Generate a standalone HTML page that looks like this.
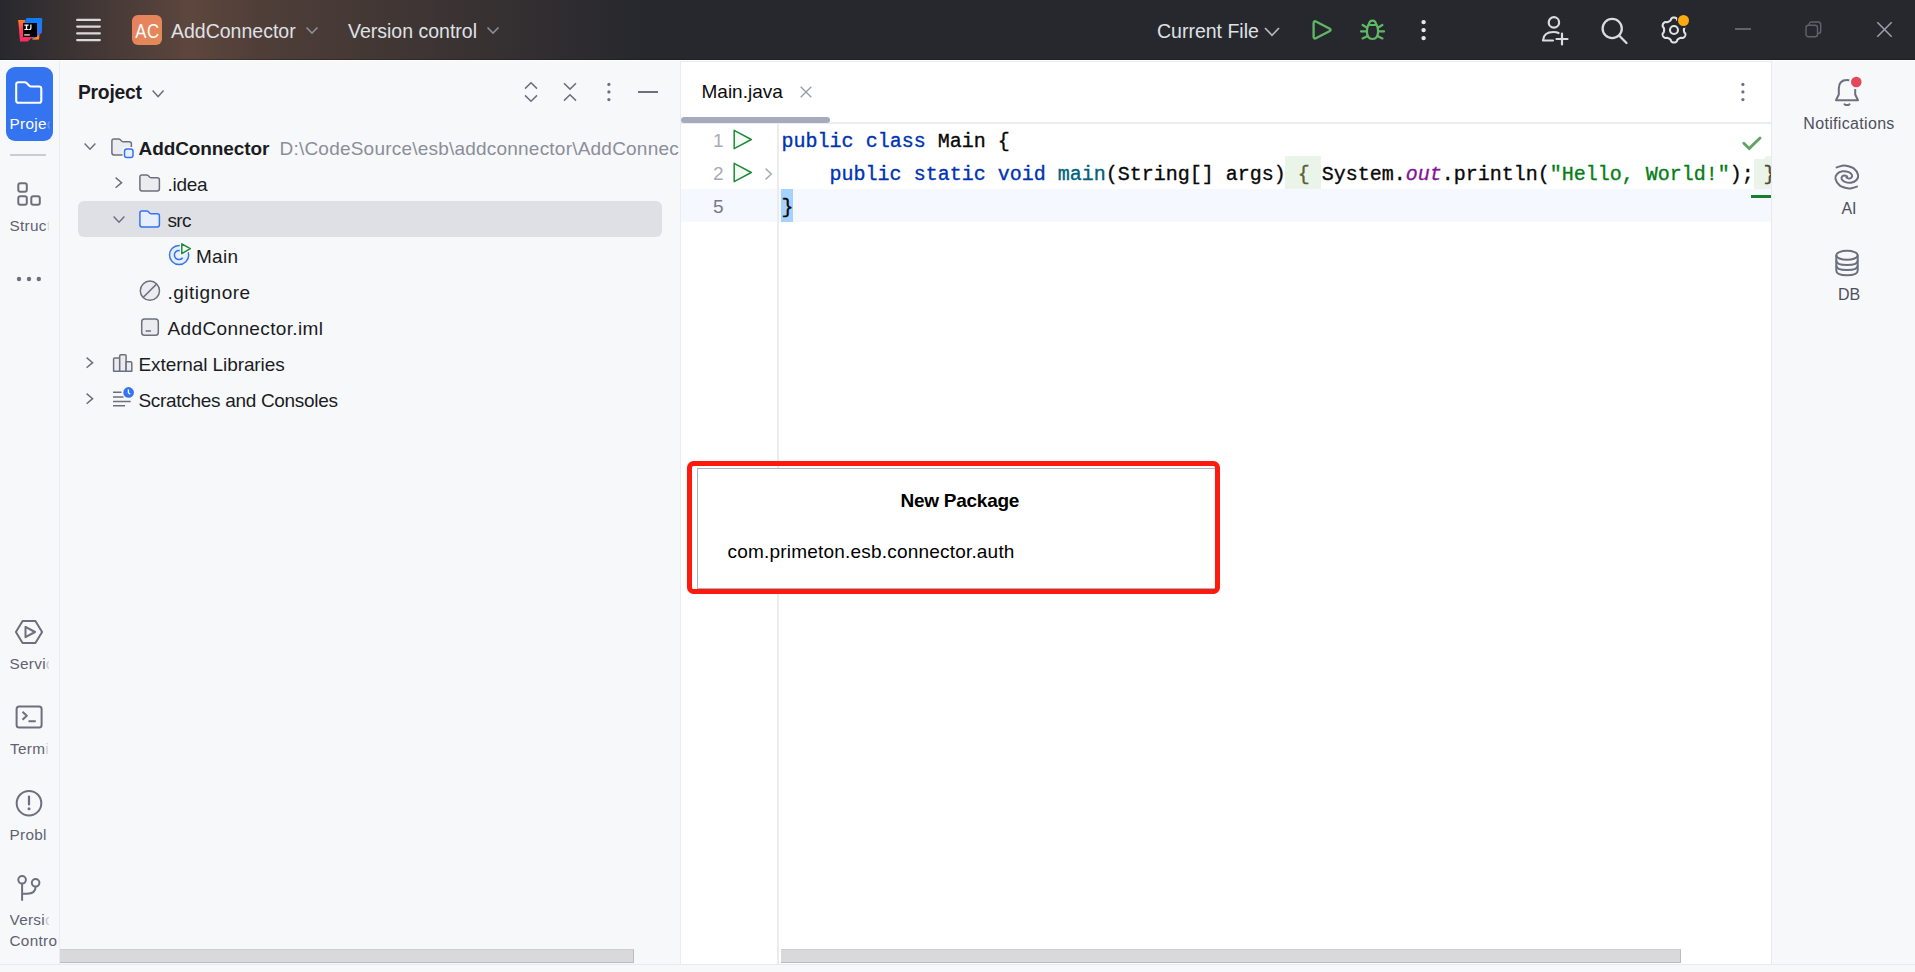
<!DOCTYPE html>
<html>
<head>
<meta charset="utf-8">
<title>AddConnector - Main.java</title>
<style>
*{box-sizing:border-box;margin:0;padding:0}
html,body{width:1915px;height:972px;overflow:hidden;background:#f7f8fa;font-family:"Liberation Sans",sans-serif;color:#1b1c1f}
.abs{position:absolute}
#titlebar{position:absolute;left:0;top:0;width:1915px;height:60px;background:#27282e;overflow:hidden}
#titlebar .glow{position:absolute;left:0;top:0;width:700px;height:60px;background:linear-gradient(90deg,rgba(39,40,46,0) 0px,rgba(96,72,62,.95) 190px,rgba(86,66,58,.85) 260px,rgba(39,40,46,0) 640px)}
.tt{position:absolute;color:#dfe1e5;font-size:19.5px;line-height:24px;margin-top:1px;white-space:nowrap}
#leftstripe{position:absolute;left:0;top:60px;width:60px;height:905px;background:#f7f8fa;border-right:1px solid #ebecf0;overflow:hidden}
.sl{position:absolute;left:0;width:58px;margin-top:2px;font-size:15.300px;letter-spacing:0.300px;color:#5f6270;white-space:nowrap;overflow:hidden}
#project{position:absolute;left:60px;top:60px;width:621px;height:905px;background:#f7f8fa;border-right:1px solid #ebecf0;overflow:hidden}
.row{position:absolute;left:0;margin-top:1px;height:36px;font-size:19.5px;line-height:36px;white-space:nowrap;color:#1b1c1f}
#editor{position:absolute;left:681px;top:60px;width:1091px;height:905px;background:#fff;overflow:hidden}
#rightstripe{position:absolute;left:1771px;top:60px;width:144px;height:905px;background:#f7f8fa;border-left:1.800px solid #e8e9ee}
.rl{position:absolute;left:0;width:152px;text-align:center;font-size:16px;color:#4d505c;white-space:nowrap}
#status{position:absolute;left:0;top:964px;width:1915px;height:8px;background:#f7f8fa;border-top:1.800px solid #e9eaee;z-index:5}
.code{position:absolute;font-family:"Liberation Mono",monospace;font-size:20px;line-height:33px;margin-top:2px;white-space:pre;color:#080808;-webkit-text-stroke:0.35px currentColor}
.kw{color:#0033b3}.fn{color:#00627a}.st{color:#067d17}.fl{color:#871094;font-style:italic}
.ln{position:absolute;font-size:19px;color:#a8abb5;text-align:right;width:40px;line-height:33px}
svg{position:absolute;overflow:visible}
</style>
</head>
<body>
<div id="titlebar">
  <div class="glow"></div>
  <!-- IntelliJ logo -->
  <svg style="left:17px;top:17px" width="26" height="26" viewBox="0 0 26 26">
    <defs>
      <linearGradient id="lg1" x1="0" y1="0" x2="0.4" y2="1"><stop offset="0" stop-color="#ff8a1a"/><stop offset="0.45" stop-color="#ff3d5a"/><stop offset="1" stop-color="#ff2a5f"/></linearGradient>
      <linearGradient id="lg2" x1="0" y1="0" x2="0.3" y2="1"><stop offset="0" stop-color="#087cfa"/><stop offset="0.7" stop-color="#1f7cf5"/><stop offset="1" stop-color="#6b57d9"/></linearGradient>
    </defs>
    <path d="M16 20 L22.5 17 L22 22.5 L15.5 22.8 Z" fill="#ff8a0d"/>
    <path d="M1.2 3 L8 3 L16 20 L10.5 24.5 L3 24.5 Z" fill="url(#lg1)"/>
    <path d="M9.5 1 L24 1 Q25.2 1 25.2 2.2 L24.8 16 L15.5 22.5 L7.5 5 Z" fill="url(#lg2)"/>
    <rect x="6" y="6" width="14" height="14" fill="#000"/>
    <rect x="7.2" y="17.2" width="5.6" height="1.4" fill="#d8d8d8"/>
    <path d="M7.4 7.6h4.2v1.1h-1.4v3.3h1.4v1.1H7.4v-1.1h1.4V8.700H7.4z M13.300 7.600h1.2v3.600q0 1.900 -1.900 1.900h-0.700v-1.100h0.500q0.900 0 0.900 -0.900z" fill="#fff"/>
  </svg>
  <!-- hamburger -->
  <svg style="left:75px;top:15px" width="28" height="30" viewBox="0 0 28 30"><path d="M2.200 4.900 H24.800 M2.200 11.600 H24.800 M2.200 18.400 H24.800 M2.200 25.100 H24.800" stroke="#d7d9de" stroke-width="2.300" stroke-linecap="round" fill="none"/></svg>
  <!-- AC badge -->
  <div class="abs" style="left:132px;top:15px;width:30px;height:30px;border-radius:6px;background:linear-gradient(135deg,#e9805f,#e28a58);color:#fff;font-size:20px;line-height:33px;text-align:center;letter-spacing:0.500px"><span style="display:inline-block;transform:scaleX(.84)">AC</span></div>
  <div class="tt" id="t_ac" style="left:171px;top:18px">AddConnector</div>
  <svg style="left:305px;top:25.500px" width="14" height="9" viewBox="0 0 14 9"><path d="M1.5 1.5 L7 7 L12.5 1.5" fill="none" stroke="#8b8e97" stroke-width="1.6"/></svg>
  <div class="tt" id="t_vc" style="left:348px;top:18px">Version control</div>
  <svg style="left:486px;top:26px" width="14" height="9" viewBox="0 0 14 9"><path d="M1.500 1.500 L7 7 L12.500 1.500" fill="none" stroke="#8b8e97" stroke-width="1.6"/></svg>
  <div class="tt" id="t_cf" style="left:1157px;top:18px">Current File</div>
  <svg style="left:1264px;top:27px" width="16" height="10" viewBox="0 0 16 10"><path d="M1 1 L8 8.3 L15 1" fill="none" stroke="#b4b7bf" stroke-width="1.7"/></svg>
  <!-- run -->
  <svg style="left:1311px;top:19px" width="22" height="22" viewBox="0 0 22 22"><path d="M2.600 4.400 Q2.600 1.300 5.300 2.700 L18.400 9.600 Q20.800 10.900 18.400 12.200 L5.300 19.100 Q2.600 20.500 2.600 17.400 Z" fill="none" stroke="#5fb865" stroke-width="2.300" stroke-linejoin="round"/></svg>
  <!-- debug -->
  <svg style="left:1359px;top:18px" width="27" height="24" viewBox="0 0 27 24">
    <g fill="none" stroke="#5fb865" stroke-width="2.200" stroke-linecap="round">
      <path d="M9.700 6.800 A3.900 5.500 0 0 1 17.300 6.800"/>
      <path d="M9.300 7 H17.700 Q19.100 9.500 19.100 13.500 Q19.100 21 13.500 21 Q7.900 21 7.900 13.500 Q7.900 9.500 9.300 7 Z" stroke-linejoin="round"/>
      <path d="M8.200 9.800 L3.600 7 M18.800 9.800 L23.400 7 M7.800 13.400 H2 M19.200 13.400 H25 M8.600 18 L3.600 20.400 M18.400 18 L23.400 20.400"/>
    </g>
  </svg>
  <!-- vertical dots -->
  <svg style="left:1420px;top:18px" width="8" height="24" viewBox="0 0 8 24"><g fill="#e4e6ea"><circle cx="3.600" cy="4.100" r="2.200"/><circle cx="3.600" cy="12.100" r="2.200"/><circle cx="3.600" cy="20.100" r="2.200"/></g></svg>
  <!-- add user -->
  <svg style="left:1541px;top:15px" width="30" height="32" viewBox="0 0 30 32">
    <g fill="none" stroke="#d9dbdf" stroke-width="2.200" stroke-linecap="round">
      <circle cx="12.900" cy="7.400" r="5.200"/>
      <path d="M2 25.500 Q2.500 17 12.500 17 Q15.500 17 17.500 18 M2 25.500 H12"/>
      <path d="M21 18.500 V29.500 M15.500 24 H26.500"/>
    </g>
  </svg>
  <!-- search -->
  <svg style="left:1600.300px;top:16px" width="30" height="30" viewBox="0 0 30 30"><g fill="none" stroke="#d9dbdf" stroke-width="2.300" stroke-linecap="round"><circle cx="12.200" cy="12.500" r="9.600"/><path d="M19.300 19.800 L26.500 27"/></g></svg>
  <!-- gear -->
  <svg style="left:1660px;top:16px" width="28" height="28" viewBox="-14 -14 28 28">
    <path id="gear" fill="none" stroke="#dfe1e5" stroke-width="2.100" stroke-linejoin="round" d="M9.90 0.00 L9.91 0.26 L9.92 0.52 L9.95 0.78 L9.99 1.05 L10.04 1.32 L10.10 1.60 L10.18 1.89 L10.29 2.19 L10.43 2.51 L10.82 2.90 L11.19 3.31 L11.30 3.67 L11.35 4.02 L11.36 4.36 L11.34 4.70 L11.29 5.03 L11.21 5.35 L11.11 5.66 L10.98 5.96 L10.83 6.25 L10.65 6.53 L10.45 6.79 L10.24 7.03 L10.00 7.26 L9.74 7.47 L9.46 7.66 L9.16 7.82 L8.83 7.95 L8.46 8.03 L7.92 7.92 L7.39 7.78 L7.04 7.82 L6.73 7.88 L6.44 7.95 L6.16 8.03 L5.90 8.12 L5.65 8.22 L5.41 8.33 L5.18 8.45 L4.95 8.57 L4.73 8.71 L4.51 8.85 L4.30 9.01 L4.08 9.17 L3.87 9.35 L3.67 9.55 L3.46 9.76 L3.25 10.00 L3.05 10.29 L2.90 10.82 L2.72 11.35 L2.47 11.62 L2.19 11.84 L1.90 12.02 L1.60 12.17 L1.29 12.29 L0.97 12.38 L0.65 12.45 L0.33 12.49 L0.00 12.50 L-0.33 12.49 L-0.65 12.45 L-0.97 12.38 L-1.29 12.29 L-1.60 12.17 L-1.90 12.02 L-2.19 11.84 L-2.47 11.62 L-2.72 11.35 L-2.90 10.82 L-3.05 10.29 L-3.25 10.00 L-3.46 9.76 L-3.67 9.55 L-3.87 9.35 L-4.08 9.17 L-4.30 9.01 L-4.51 8.85 L-4.73 8.71 L-4.95 8.57 L-5.18 8.45 L-5.41 8.33 L-5.65 8.22 L-5.90 8.12 L-6.16 8.03 L-6.44 7.95 L-6.73 7.88 L-7.04 7.82 L-7.39 7.78 L-7.92 7.92 L-8.46 8.03 L-8.83 7.95 L-9.16 7.82 L-9.46 7.66 L-9.74 7.47 L-10.00 7.26 L-10.24 7.03 L-10.45 6.79 L-10.65 6.53 L-10.83 6.25 L-10.98 5.96 L-11.11 5.66 L-11.21 5.35 L-11.29 5.03 L-11.34 4.70 L-11.36 4.36 L-11.35 4.02 L-11.30 3.67 L-11.19 3.31 L-10.82 2.90 L-10.43 2.51 L-10.29 2.19 L-10.18 1.89 L-10.10 1.60 L-10.04 1.32 L-9.99 1.05 L-9.95 0.78 L-9.92 0.52 L-9.91 0.26 L-9.90 0.00 L-9.91 -0.26 L-9.92 -0.52 L-9.95 -0.78 L-9.99 -1.05 L-10.04 -1.32 L-10.10 -1.60 L-10.18 -1.89 L-10.29 -2.19 L-10.43 -2.51 L-10.82 -2.90 L-11.19 -3.31 L-11.30 -3.67 L-11.35 -4.02 L-11.36 -4.36 L-11.34 -4.70 L-11.29 -5.03 L-11.21 -5.35 L-11.11 -5.66 L-10.98 -5.96 L-10.83 -6.25 L-10.65 -6.53 L-10.45 -6.79 L-10.24 -7.03 L-10.00 -7.26 L-9.74 -7.47 L-9.46 -7.66 L-9.16 -7.82 L-8.83 -7.95 L-8.46 -8.03 L-7.92 -7.92 L-7.39 -7.78 L-7.04 -7.82 L-6.73 -7.88 L-6.44 -7.95 L-6.16 -8.03 L-5.90 -8.12 L-5.65 -8.22 L-5.41 -8.33 L-5.18 -8.45 L-4.95 -8.57 L-4.73 -8.71 L-4.51 -8.85 L-4.30 -9.01 L-4.08 -9.17 L-3.87 -9.35 L-3.67 -9.55 L-3.46 -9.76 L-3.25 -10.00 L-3.05 -10.29 L-2.90 -10.82 L-2.72 -11.35 L-2.47 -11.62 L-2.19 -11.84 L-1.90 -12.02 L-1.60 -12.17 L-1.29 -12.29 L-0.97 -12.38 L-0.65 -12.45 L-0.33 -12.49 L-0.00 -12.50 L0.33 -12.49 L0.65 -12.45 L0.97 -12.38 L1.29 -12.29 L1.60 -12.17 L1.90 -12.02 L2.19 -11.84 L2.47 -11.62 L2.72 -11.35 L2.90 -10.82 L3.05 -10.29 L3.25 -10.00 L3.46 -9.76 L3.67 -9.55 L3.87 -9.35 L4.08 -9.17 L4.30 -9.01 L4.51 -8.85 L4.73 -8.71 L4.95 -8.57 L5.18 -8.45 L5.41 -8.33 L5.65 -8.22 L5.90 -8.12 L6.16 -8.03 L6.44 -7.95 L6.73 -7.88 L7.04 -7.82 L7.39 -7.78 L7.92 -7.92 L8.46 -8.03 L8.83 -7.95 L9.16 -7.82 L9.46 -7.66 L9.74 -7.47 L10.00 -7.26 L10.24 -7.03 L10.45 -6.79 L10.65 -6.53 L10.83 -6.25 L10.98 -5.96 L11.11 -5.66 L11.21 -5.35 L11.29 -5.03 L11.34 -4.70 L11.36 -4.36 L11.35 -4.02 L11.30 -3.67 L11.19 -3.31 L10.82 -2.90 L10.43 -2.51 L10.29 -2.19 L10.18 -1.89 L10.10 -1.60 L10.04 -1.32 L9.99 -1.05 L9.95 -0.78 L9.92 -0.52 L9.91 -0.26 Z"/>
    <circle cx="0" cy="0" r="4" fill="none" stroke="#dfe1e5" stroke-width="2.100"/>
  </svg>
  <div class="abs" style="left:1676.5px;top:13px;width:14.500px;height:14.500px;border-radius:50%;background:#27282e"></div>
  <div class="abs" style="left:1678.2px;top:14.700px;width:11.200px;height:11.200px;border-radius:50%;background:#fbab10"></div>
  <!-- window controls -->
  <div class="abs" style="left:1735px;top:28px;width:16px;height:1.500px;background:#5f636b"></div>
  <svg style="left:1805px;top:21px" width="17" height="17" viewBox="0 0 17 17"><g fill="none" stroke="#5f636b" stroke-width="1.400"><rect x="1" y="4.200" width="11.500" height="11.500" rx="2.500"/><path d="M4.200 4 V3.500 Q4.200 1 6.700 1 H13 Q15.700 1 15.700 3.700 V10 Q15.700 12.500 13.200 12.500 H12.700"/></g></svg>
  <svg style="left:1876px;top:21px" width="17" height="17" viewBox="0 0 17 17"><path d="M1.300 1.300 L15.700 15.700 M15.700 1.300 L1.300 15.700" fill="none" stroke="#9ea1a9" stroke-width="1.500"/></svg>
</div>
<div id="leftstripe">
  <!-- coords relative to (0,60) -->
  <div class="abs" style="left:6px;top:7px;width:47px;height:74px;border-radius:9px;background:#3574f0"></div>
  <svg style="left:14px;top:20px" width="30" height="26" viewBox="0 0 30 26"><path d="M2.200 4.500 Q2.200 2.200 4.500 2.200 H10.800 Q11.800 2.200 12.600 3 L15.300 5.800 Q16 6.500 17 6.500 H25 Q27.300 6.500 27.300 8.800 V20.500 Q27.300 22.800 25 22.800 H4.500 Q2.200 22.800 2.200 20.500 Z" fill="none" stroke="#fff" stroke-width="2.100" stroke-linejoin="round"/></svg>
  <div class="sl" id="s_proj" style="left:9.500px;top:52px;width:40px;color:#fff;line-height:20px">Proje<span style="opacity:.25">c</span></div>
  <div class="abs" style="left:10px;top:94px;width:36px;height:2px;background:#c9ccd6"></div>
  <!-- structure -->
  <svg style="left:16px;top:121px" width="26" height="26" viewBox="0 0 26 26"><g fill="none" stroke="#6c707e" stroke-width="2"><rect x="2.300" y="2.300" width="8.500" height="8.500" rx="2"/><rect x="2.300" y="15.300" width="8.500" height="8.500" rx="2"/><rect x="15.300" y="15.300" width="8.500" height="8.500" rx="2"/></g></svg>
  <div class="sl" id="s_struc" style="left:9.500px;top:154px;width:39px;line-height:20px">Struc<span style="opacity:.2">t</span></div>
  <!-- more -->
  <svg style="left:15px;top:215px" width="28" height="8" viewBox="0 0 28 8"><g fill="#6c707e"><circle cx="4" cy="4" r="2.200"/><circle cx="14" cy="4" r="2.200"/><circle cx="23.800" cy="4" r="2.200"/></g></svg>
  <!-- services -->
  <svg style="left:14px;top:559px" width="30" height="26" viewBox="0 0 30 26"><g fill="none" stroke="#6c707e" stroke-width="2" stroke-linejoin="round"><path d="M1.900 13 L8.600 1.900 H21.400 L28.100 13 L21.400 24.100 H8.600 Z"/><path d="M11.500 7.800 L21 13 L11.500 18.200 Z"/></g></svg>
  <div class="sl" id="s_serv" style="left:9.500px;top:592px;width:39px;line-height:20px">Servi<span style="opacity:.3">c</span></div>
  <!-- terminal -->
  <svg style="left:15px;top:645px" width="28" height="24" viewBox="0 0 28 24"><g fill="none" stroke="#6c707e" stroke-width="2" stroke-linejoin="round"><rect x="1.600" y="1.500" width="25" height="21" rx="2.500"/><path d="M7.500 6.800 L11.800 10.800 L7.500 14.800 M13.500 16.200 H20.800"/></g></svg>
  <div class="sl" id="s_term" style="left:10px;top:677px;width:38px;line-height:20px">Term<span style="opacity:.25">i</span></div>
  <!-- problems -->
  <svg style="left:15px;top:729px" width="28" height="28" viewBox="0 0 28 28"><circle cx="14" cy="14.200" r="12.300" fill="none" stroke="#6c707e" stroke-width="2"/><path d="M14 7.500 V15.500" stroke="#6c707e" stroke-width="2.200" stroke-linecap="round"/><circle cx="14" cy="19.800" r="1.500" fill="#6c707e"/></svg>
  <div class="sl" id="s_prob" style="left:9.500px;top:763px;width:38px;line-height:20px">Probl</div>
  <!-- vcs -->
  <svg style="left:16px;top:813px" width="26" height="30" viewBox="0 0 26 30"><g fill="none" stroke="#6c707e" stroke-width="2" stroke-linecap="round"><circle cx="6.100" cy="6.800" r="3.800"/><circle cx="19.600" cy="9.800" r="3.800"/><path d="M6.100 10.800 V27 M19.600 13.800 Q19.600 20.700 11 20.700 H6.100"/></g></svg>
  <div class="sl" id="s_vers" style="left:9.500px;top:848px;width:39px;line-height:20px">Versi<span style="opacity:.3">c</span></div>
  <div class="sl" id="s_cont" style="left:9.500px;top:869px;width:49px;line-height:20px">Contro</div>
</div>
<div id="project"></div>
<div id="editor"></div>
<div id="rightstripe"></div>
<div id="status"></div>
<div id="edlayer" class="abs" style="left:681px;top:60px;width:1090px;height:905px;overflow:hidden;background:#fff">
  <!-- coords relative to (681,60) -->
  <div class="abs" style="left:0;top:1px;width:1090px;height:1.200px;background:#ebecf0"></div>
  <div class="abs" id="tabtxt" style="left:20.500px;top:20px;font-size:19px;line-height:24px;color:#0b0c0e;white-space:nowrap">Main.java</div>
  <svg style="left:119.300px;top:25.800px" width="12" height="12" viewBox="0 0 12 12"><path d="M0.700 0.700 L11.300 11.300 M11.300 0.700 L0.700 11.300" stroke="#9699a6" stroke-width="1.300" fill="none"/></svg>
  <svg style="left:1059px;top:21px" width="6" height="22" viewBox="0 0 6 22"><g fill="#6c707e"><circle cx="2.900" cy="3.400" r="1.600"/><circle cx="2.900" cy="10.900" r="1.600"/><circle cx="2.900" cy="18.600" r="1.600"/></g></svg>
  <div class="abs" style="left:0;top:62px;width:1090px;height:1.700px;background:#ebecf0"></div>
  <div class="abs" style="left:0.200px;top:57px;width:148.600px;height:5.800px;border-radius:3px;background:#a6abbb"></div>
  <!-- current line -->
  <div class="abs" style="left:0;top:129px;width:1090px;height:33px;background:#f5f8fe"></div>
  <!-- gutter separator -->
  <div class="abs" style="left:96.200px;top:64px;width:1.800px;height:841px;background:#ebecf0"></div>
  <!-- line numbers -->
  <div class="ln" style="left:2.700px;top:64px">1</div>
  <div class="ln" style="left:2.700px;top:97px">2</div>
  <div class="ln" style="left:2.700px;top:130px;color:#767a8a">5</div>
  <svg style="left:52px;top:69px" width="20" height="21" viewBox="0 0 20 21"><path d="M1.200 1.300 L18.300 10.500 L1.200 19.700 Z" fill="#f2fcf3" stroke="#208a3c" stroke-width="1.500" stroke-linejoin="round"/></svg>
  <svg style="left:52px;top:102px" width="20" height="21" viewBox="0 0 20 21"><path d="M1.200 1.300 L18.300 10.500 L1.200 19.700 Z" fill="#f2fcf3" stroke="#208a3c" stroke-width="1.500" stroke-linejoin="round"/></svg>
  <svg style="left:83.500px;top:108px" width="8" height="12" viewBox="0 0 8 12"><path d="M0.600 0.600 L6.300 6 L0.600 11.400" fill="none" stroke="#a8abb5" stroke-width="1.500"/></svg>
  <!-- fold highlights -->
  <div class="abs" style="left:604.300px;top:96px;width:36px;height:33px;background:#ebf4e8"></div>
  <div class="abs" style="left:1072.500px;top:99px;width:20px;height:30px;background:#ebf4e8"></div>
  <div class="abs" style="left:1083px;top:96px;width:12px;height:8px;border-radius:4px 0 0 0;background:#ebf4e8"></div>
  <!-- selection on closing brace -->
  <div class="abs" style="left:100px;top:129px;width:12px;height:33px;background:#a6d2ff"></div>
  <!-- code -->
  <div class="code" id="c1" style="left:100.600px;top:63px"><span class="kw">public</span> <span class="kw">class</span> Main {</div>
  <div class="code" id="c2" style="left:100.600px;top:96px">    <span class="kw">public</span> <span class="kw">static</span> <span class="kw">void</span> <span class="fn">main</span>(String[] args) <span style="color:#5b5f35">{</span> System.<span class="fl">out</span>.println(<span class="st">"Hello, World!"</span>); <span style="color:#4a4d30;position:relative;left:-2.500px">}</span></div>
  <div class="code" id="c3" style="left:100.600px;top:129px">}</div>
  <!-- inspection check -->
  <svg style="left:1061px;top:76px" width="20" height="15" viewBox="0 0 20 15"><path d="M1.800 7.300 L7.200 12.500 L18 2" fill="none" stroke="#5fa463" stroke-width="2.900" stroke-linecap="round"/></svg>
  <div class="abs" style="left:1070px;top:134.500px;width:20px;height:3.500px;background:#18802a"></div>
  <!-- h scrollbar -->
  <div class="abs" style="left:100px;top:889px;width:900px;height:14px;background:#d9d9db;border-top:1px solid #cfcfd2;border-right:1.500px solid #bcbcc0;border-bottom:1.500px solid #bcbcc0"></div>
</div>
<div id="rslayer" class="abs" style="left:1773px;top:60px;width:142px;height:905px;overflow:hidden">
  <!-- coords relative to (1773,60) -->
  <svg style="left:60px;top:17px" width="28" height="30" viewBox="0 0 28 30"><g fill="none" stroke="#6c707e" stroke-width="2" stroke-linecap="round" stroke-linejoin="round"><path d="M3 23.300 L5.800 17.500 V11.500 Q5.800 3 14 3 Q22.200 3 22.200 11.500 V17.500 L25 23.300 Z"/><path d="M11.500 27.300 Q14 28.800 16.500 27.300"/></g><circle cx="23.300" cy="5" r="7.300" fill="#f7f8fa"/><circle cx="23.300" cy="5" r="5.300" fill="#e5485b"/></svg>
  <div class="rl" id="rl1" style="letter-spacing:0.330px;left:0;top:53.500px;width:152px;line-height:20px">Notifications</div>
  <svg style="left:60px;top:103px" width="28" height="28" viewBox="0 0 28 28"><path id="spiral" d="M3.60 4.40 C4.38 4.17 6.75 3.27 8.30 3.00 C9.85 2.73 10.83 2.35 12.90 2.75 C14.97 3.15 18.67 3.88 20.70 5.40 C22.73 6.93 24.63 9.97 25.10 11.90 C25.57 13.83 24.68 15.70 23.50 17.00 C22.32 18.30 19.93 19.38 18.00 19.70 C16.07 20.02 13.45 19.50 11.90 18.90 C10.35 18.30 9.15 17.03 8.70 16.10 C8.25 15.17 8.67 13.92 9.20 13.30 C9.73 12.68 11.07 12.37 11.90 12.40 C12.73 12.43 13.82 13.32 14.20 13.50 M24.00 23.60 C23.22 23.83 20.85 24.73 19.30 25.00 C17.75 25.27 16.77 25.65 14.70 25.25 C12.63 24.85 8.93 24.12 6.90 22.60 C4.87 21.08 2.97 18.03 2.50 16.10 C2.03 14.17 2.92 12.30 4.10 11.00 C5.28 9.70 7.67 8.62 9.60 8.30 C11.53 7.98 14.15 8.50 15.70 9.10 C17.25 9.70 18.45 10.97 18.90 11.90 C19.35 12.83 18.93 14.08 18.40 14.70 C17.87 15.32 16.53 15.63 15.70 15.60 C14.87 15.57 13.78 14.68 13.40 14.50" fill="none" stroke="#6c707e" stroke-width="2" stroke-linecap="round"/></svg>
  <div class="rl" id="rl2" style="left:0;top:139px;width:152px;line-height:20px">AI</div>
  <svg style="left:60px;top:188px" width="28" height="30" viewBox="0 0 28 30"><g fill="none" stroke="#6c707e" stroke-width="2"><ellipse cx="14" cy="7.300" rx="10.700" ry="4.500"/><path d="M3.300 7.300 V22.500 Q3.300 27.300 14 27.300 Q24.700 27.300 24.700 22.500 V7.300"/><path d="M3.300 12.500 Q3.300 17 14 17 Q24.700 17 24.700 12.500 M3.300 17.500 Q3.300 22 14 22 Q24.700 22 24.700 17.500"/></g></svg>
  <div class="rl" id="rl3" style="left:0;top:225px;width:152px;line-height:20px">DB</div>
</div>
<div id="popup" class="abs" style="left:697px;top:468px;width:518.500px;height:121px;background:#fff;border:1.300px solid #aeb3c1">
  <div class="abs" id="np" style="letter-spacing:-0.250px;left:-1.200px;top:19.700px;width:526px;text-align:center;font-size:19px;font-weight:bold;line-height:24px;color:#000">New Package</div>
  <div class="abs" id="pk" style="letter-spacing:0.200px;left:29.500px;top:71px;font-size:19px;line-height:24px;color:#000;white-space:nowrap">com.primeton.esb.connector.auth</div>
</div>
<div class="abs" style="left:687.200px;top:461.200px;width:533.200px;height:133.200px;border:5.500px solid #ff1a0e;border-radius:6.500px"></div>
<div id="projlayer" class="abs" style="left:0;top:0;width:680px;height:965px;overflow:hidden">
  <div class="abs" id="p_title" style="left:78px;top:81px;letter-spacing:-0.250px;font-size:19.300px;font-weight:bold;line-height:24px;color:#1b1c1f;white-space:nowrap">Project</div>
  <svg style="left:152.3px;top:89.5px" width="12.2" height="7.6" viewBox="0 0 12.2 7.6"><path d="M0.600 0.600 L6.1 6.6 L11.6 0.600" fill="none" stroke="#6c707e" stroke-width="1.5"/></svg>
  <!-- header actions -->
  <svg style="left:524px;top:81px" width="14" height="22" viewBox="0 0 14 22"><path d="M1 7.600 L7 1.700 L13 7.600 M1 14.400 L7 20.300 L13 14.400" fill="none" stroke="#6c707e" stroke-width="1.500"/></svg>
  <svg style="left:563px;top:81px" width="14" height="22" viewBox="0 0 14 22"><path d="M1 2.200 L7 8.100 L13 2.200 M1 19.600 L7 13.700 L13 19.600" fill="none" stroke="#6c707e" stroke-width="1.500"/></svg>
  <svg style="left:606px;top:81px" width="6" height="22" viewBox="0 0 6 22"><g fill="#6c707e"><circle cx="2.900" cy="3.400" r="1.600"/><circle cx="2.900" cy="10.900" r="1.600"/><circle cx="2.900" cy="18.600" r="1.600"/></g></svg>
  <div class="abs" style="left:638px;top:91.100px;width:19.500px;height:1.600px;background:#6c707e"></div>
  <!-- selection -->
  <div class="abs" style="left:78px;top:201px;width:584px;height:36px;border-radius:6px;background:#dfe0e5"></div>
  <!-- row 1 -->
  <svg style="left:83.7px;top:143.3px" width="12" height="7.2" viewBox="0 0 12 7.2"><path d="M0.600 0.600 L6.0 6.2 L11.4 0.600" fill="none" stroke="#6c707e" stroke-width="1.5"/></svg>
  <svg style="left:110.500px;top:138px" width="24" height="21" viewBox="0 0 24 21"><path d="M0.900 3 Q0.900 0.900 3 0.900 H7.600 Q8.500 0.900 9.100 1.500 L10.800 3.200 Q11.400 3.800 12.300 3.800 H18.300 Q20.400 3.800 20.400 5.900 V14.800 Q20.400 16.900 18.300 16.900 H3 Q0.900 16.900 0.900 14.800 Z" fill="#ebecf0" stroke="#6c707e" stroke-width="1.500" stroke-linejoin="round"/><rect x="11.500" y="9" width="12" height="12" fill="#f7f8fa"/><rect x="13.500" y="11" width="8.500" height="8.500" rx="2.300" fill="#e7effd" stroke="#3574f0" stroke-width="1.500"/></svg>
  <div class="row" id="r1" style="letter-spacing:-0.095px;left:138.500px;top:130px;font-weight:bold;font-size:19px">AddConnector</div>
  <div class="row" id="r1p" style="letter-spacing:0.215px;left:279.500px;top:130px;color:#8b8e99;font-size:19px">D:\CodeSource\esb\addconnector\AddConnec</div>
  <!-- row 2 -->
  <svg style="left:114.6px;top:177.3px" width="7.6" height="11.4" viewBox="0 0 7.6 11.4"><path d="M0.600 0.600 L6.6 5.7 L0.600 10.8" fill="none" stroke="#6c707e" stroke-width="1.5"/></svg>
  <svg style="left:139px;top:174px" width="22" height="18" viewBox="0 0 22 18"><path d="M0.900 3 Q0.900 0.900 3 0.900 H7.600 Q8.500 0.900 9.100 1.500 L10.800 3.200 Q11.400 3.800 12.300 3.800 H18.300 Q20.400 3.800 20.400 5.900 V14.800 Q20.400 16.900 18.300 16.900 H3 Q0.900 16.900 0.900 14.800 Z" fill="#ebecf0" stroke="#6c707e" stroke-width="1.500" stroke-linejoin="round"/></svg>
  <div class="row" id="r2" style="letter-spacing:-0.280px;left:167.500px;top:166px;font-size:19px">.idea</div>
  <!-- row 3 -->
  <svg style="left:113px;top:216px" width="12" height="7.2" viewBox="0 0 12 7.2"><path d="M0.600 0.600 L6.0 6.2 L11.4 0.600" fill="none" stroke="#6c707e" stroke-width="1.5"/></svg>
  <svg style="left:139px;top:210px" width="22" height="18" viewBox="0 0 22 18"><path d="M0.900 3 Q0.900 0.900 3 0.900 H7.600 Q8.500 0.900 9.100 1.500 L10.800 3.200 Q11.400 3.800 12.300 3.800 H18.300 Q20.400 3.800 20.400 5.900 V14.800 Q20.400 16.900 18.300 16.900 H3 Q0.900 16.900 0.900 14.800 Z" fill="#e7effd" stroke="#3574f0" stroke-width="1.500" stroke-linejoin="round"/></svg>
  <div class="row" id="r3" style="letter-spacing:-0.677px;left:167.500px;top:202px;font-size:19px">src</div>
  <!-- row 4 -->
  <svg style="left:168px;top:242px" width="25" height="25" viewBox="0 0 25 25">
    <circle cx="11.100" cy="13" r="9.600" fill="#e7effd" stroke="#3574f0" stroke-width="1.500"/>
    <path d="M14.700 10.300 A4.600 4.600 0 1 0 14.700 15.700" fill="none" stroke="#3574f0" stroke-width="1.500"/>
    <path d="M11.800 -1.800 L26 6.700 L11.800 15.200 Z" fill="#f7f8fa"/>
    <path d="M13.800 1.800 L22.300 6.600 L13.800 11.600 Z" fill="#f2fcf3" stroke="#208a3c" stroke-width="1.500" stroke-linejoin="round"/>
  </svg>
  <div class="row" id="r4" style="letter-spacing:0.277px;left:196px;top:238px;font-size:19px">Main</div>
  <!-- row 5 -->
  <svg style="left:139px;top:280px" width="22" height="22" viewBox="0 0 22 22"><circle cx="10.900" cy="10.700" r="9.600" fill="#ebecf0" stroke="#6c707e" stroke-width="1.500"/><path d="M4.300 17.300 L17.500 4.100" stroke="#6c707e" stroke-width="1.500"/></svg>
  <div class="row" id="r5" style="letter-spacing:0.493px;left:167.500px;top:274px;font-size:19px">.gitignore</div>
  <!-- row 6 -->
  <svg style="left:140px;top:317px" width="20" height="20" viewBox="0 0 20 20"><rect x="1.700" y="1.900" width="16.600" height="16.400" rx="2.800" fill="#ebecf0" stroke="#6c707e" stroke-width="1.500"/><path d="M5.600 14 H11" stroke="#6c707e" stroke-width="1.500"/></svg>
  <div class="row" id="r6" style="letter-spacing:0.371px;left:167.500px;top:310px;font-size:19px">AddConnector.iml</div>
  <!-- row 7 -->
  <svg style="left:86.1px;top:357.3px" width="7.6" height="11.4" viewBox="0 0 7.6 11.4"><path d="M0.600 0.600 L6.6 5.7 L0.600 10.8" fill="none" stroke="#6c707e" stroke-width="1.5"/></svg>
  <svg style="left:112px;top:353px" width="22" height="20" viewBox="0 0 22 20"><g fill="#ebecf0" stroke="#6c707e" stroke-width="1.500" stroke-linejoin="round"><path d="M1.600 18.200 V6 Q1.600 4.900 2.700 4.900 H7.700 V18.200 Z"/><path d="M7.700 18.200 V2.900 Q7.700 1.800 8.800 1.800 H13 Q14.100 1.800 14.100 2.900 V18.200 Z"/><path d="M14.100 18.200 V8.800 H18.700 Q19.800 8.800 19.800 9.900 V18.200 Z"/></g></svg>
  <div class="row" id="r7" style="letter-spacing:-0.097px;left:138.500px;top:346px;font-size:19px">External Libraries</div>
  <!-- row 8 -->
  <svg style="left:86.1px;top:393.3px" width="7.6" height="11.4" viewBox="0 0 7.6 11.4"><path d="M0.600 0.600 L6.6 5.7 L0.600 10.8" fill="none" stroke="#6c707e" stroke-width="1.5"/></svg>
  <svg style="left:112px;top:386px" width="24" height="22" viewBox="0 0 24 22"><g stroke="#6c707e" stroke-width="1.500"><path d="M1 6.200 H9.500 M1 10.900 H11.500 M1 15.500 H18.700 M1 19.800 H13"/></g><circle cx="16.600" cy="6.400" r="5.300" fill="#3574f0"/><path d="M16.400 3.400 V6.700 L18.300 8.300" fill="none" stroke="#fff" stroke-width="1.300"/></svg>
  <div class="row" id="r8" style="letter-spacing:-0.311px;left:138.500px;top:382px;font-size:19px">Scratches and Consoles</div>
  <!-- h scrollbar -->
  <div class="abs" style="left:60px;top:949px;width:574px;height:14px;background:#d9d9db;border-top:1px solid #cfcfd2;border-right:1.500px solid #bcbcc0;border-bottom:1.500px solid #bcbcc0"></div>
</div>
<div class="abs" style="left:0;top:60px;width:1915px;height:1px;background:#fdfdfe"></div>
<div class="abs" style="left:0;top:59px;width:1915px;height:1px;background:rgba(20,21,24,.35)"></div>
</body>
</html>
